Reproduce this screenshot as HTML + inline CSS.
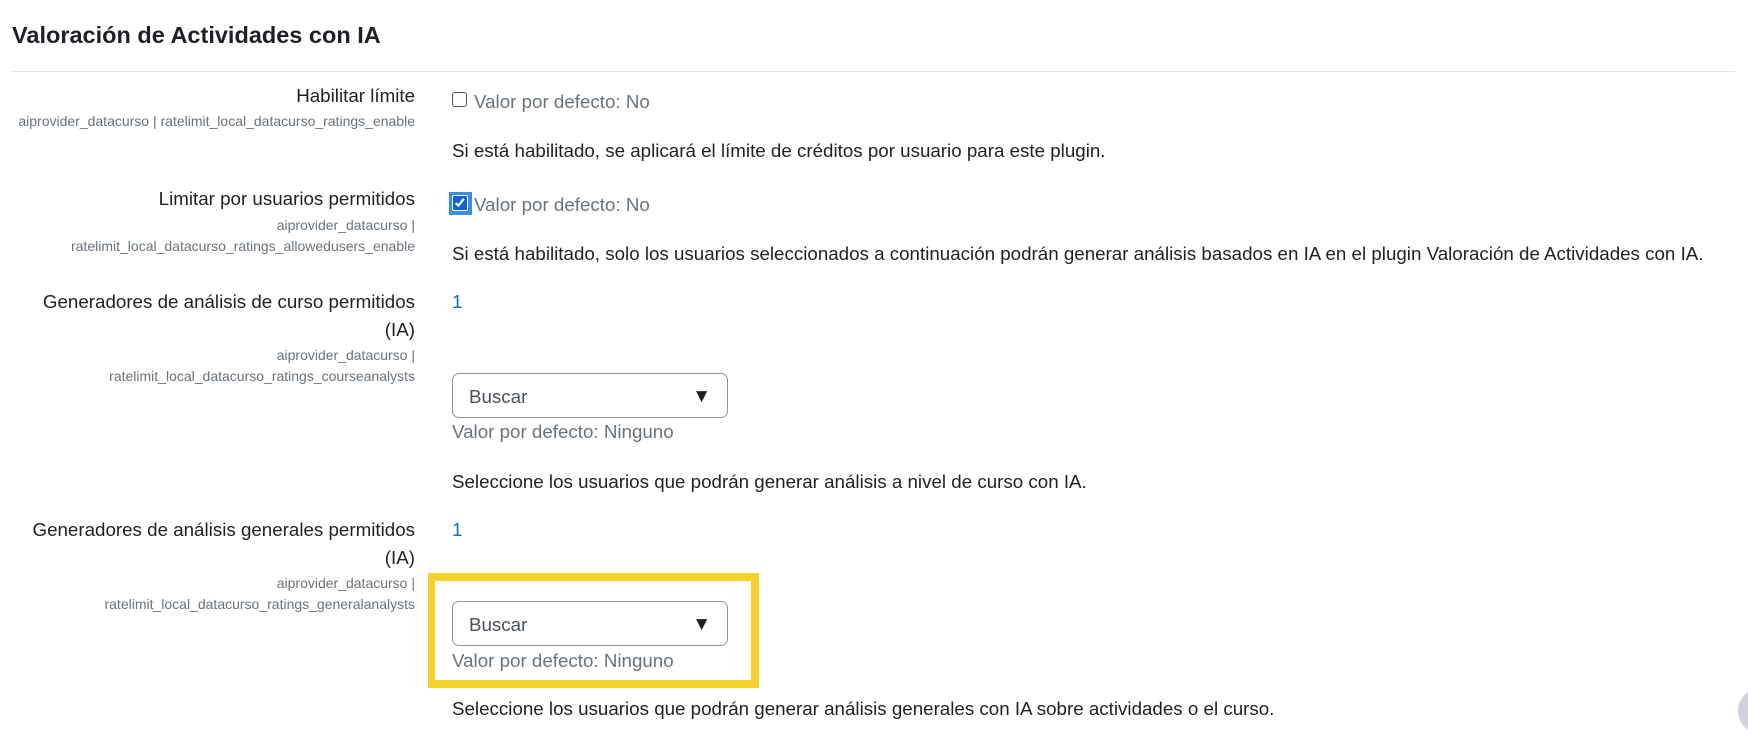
<!DOCTYPE html>
<html><head><meta charset="utf-8"><style>
body{margin:0;width:1748px;height:732px;background:#fff;font-family:"Liberation Sans",Arial,sans-serif;color:#1d2125;position:relative;overflow:hidden}
.a{position:absolute;white-space:nowrap;line-height:1}
.lbl{font-size:18.75px;right:1333px;text-align:right}
.sm{font-size:14px;color:#6a737b;right:1333px;text-align:right}
.c{left:452px;font-size:18.75px}
.mu{color:#6a737b}
.sel{position:absolute;left:452px;width:276px;height:45px;border:1px solid #8f959e;border-radius:7px;box-sizing:border-box}
.sel span{position:absolute;left:16px;top:12px;font-size:18.75px;color:#495057}
.sel i{position:absolute;right:16px;top:12px;font-style:normal;font-size:19px;color:#1d2125}
</style></head><body>
<div class="a" style="left:12px;top:24px;font-size:23.5px;font-weight:bold">Valoración de Actividades con IA</div>
<div style="position:absolute;left:12px;top:71px;width:1723px;height:1px;background:#dee2e6"></div>

<div class="a lbl" style="top:87px">Habilitar límite</div>
<div class="a sm" style="top:114px">aiprovider_datacurso | ratelimit_local_datacurso_ratings_enable</div>
<div style="position:absolute;left:452px;top:92px;width:15px;height:15px;border:1px solid #555;border-radius:3px;box-sizing:border-box"></div>
<div class="a c mu" style="left:474px;top:93px">Valor por defecto: No</div>
<div class="a c" style="top:142px">Si está habilitado, se aplicará el límite de créditos por usuario para este plugin.</div>

<div class="a lbl" style="top:190px">Limitar por usuarios permitidos</div>
<div class="a sm" style="top:218px">aiprovider_datacurso |</div>
<div class="a sm" style="top:239px">ratelimit_local_datacurso_ratings_allowedusers_enable</div>
<div style="position:absolute;left:449px;top:192px;width:23px;height:23px;background:#3f8ddb"></div>
<div style="position:absolute;left:452px;top:195px;width:16px;height:16px;background:#0b64d8;border:1.5px solid #fff;box-sizing:border-box;border-radius:2px"><svg width="13" height="13" viewBox="0 0 12 12" style="position:absolute;left:0;top:0"><path d="M2.5 6.5 L5 9 L10 2.5" stroke="#fff" stroke-width="2" fill="none"/></svg></div>
<div class="a c mu" style="left:474px;top:196px">Valor por defecto: No</div>
<div class="a c" style="top:245px">Si está habilitado, solo los usuarios seleccionados a continuación podrán generar análisis basados en IA en el plugin Valoración de Actividades con IA.</div>

<div class="a lbl" style="top:293px">Generadores de análisis de curso permitidos</div>
<div class="a lbl" style="top:321px">(IA)</div>
<div class="a sm" style="top:348px">aiprovider_datacurso |</div>
<div class="a sm" style="top:369px">ratelimit_local_datacurso_ratings_courseanalysts</div>
<div class="a c" style="top:293px;color:#0f6cbf">1</div>
<div class="sel" style="top:373px"><span>Buscar</span><i>▼</i></div>
<div class="a c mu" style="top:423px">Valor por defecto: Ninguno</div>
<div class="a c" style="top:473px">Seleccione los usuarios que podrán generar análisis a nivel de curso con IA.</div>

<div class="a lbl" style="top:521px">Generadores de análisis generales permitidos</div>
<div class="a lbl" style="top:549px">(IA)</div>
<div class="a sm" style="top:576px">aiprovider_datacurso |</div>
<div class="a sm" style="top:597px">ratelimit_local_datacurso_ratings_generalanalysts</div>
<div class="a c" style="top:521px;color:#0f6cbf">1</div>
<div style="position:absolute;left:428px;top:573px;width:331px;height:115px;border:8px solid #f4d22d;border-left-width:7px;box-sizing:border-box"></div>
<div class="sel" style="top:601px"><span>Buscar</span><i>▼</i></div>
<div class="a c mu" style="top:652px">Valor por defecto: Ninguno</div>
<div class="a c" style="top:700px">Seleccione los usuarios que podrán generar análisis generales con IA sobre actividades o el curso.</div>

<div style="position:absolute;left:1738px;top:688px;width:46px;height:46px;border-radius:50%;background:#ced4da"></div>
</body></html>
